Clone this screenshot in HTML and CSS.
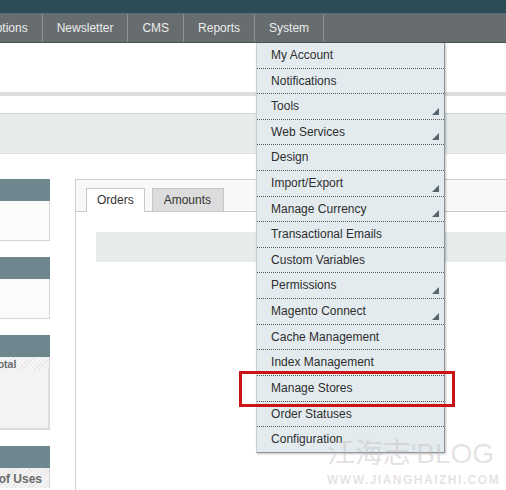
FILE: index.html
```html
<!DOCTYPE html>
<html>
<head>
<meta charset="utf-8">
<link rel="stylesheet" href="styles.css">
</head>
<body>
<div class="topbar"></div>
<ul class="nav">
  <li class="nav-item first">Promotions</li>
  <li class="nav-item">Newsletter</li>
  <li class="nav-item">CMS</li>
  <li class="nav-item">Reports</li>
  <li class="nav-item sys">System
    <ul class="dropdown">
      <li class="dd-item">My Account</li>
      <li class="dd-item">Notifications</li>
      <li class="dd-item sub">Tools</li>
      <li class="dd-item sub">Web Services</li>
      <li class="dd-item">Design</li>
      <li class="dd-item sub">Import/Export</li>
      <li class="dd-item sub">Manage Currency</li>
      <li class="dd-item">Transactional Emails</li>
      <li class="dd-item">Custom Variables</li>
      <li class="dd-item sub">Permissions</li>
      <li class="dd-item sub">Magento Connect</li>
      <li class="dd-item">Cache Management</li>
      <li class="dd-item">Index Management</li>
      <li class="dd-item">Manage Stores</li>
      <li class="dd-item">Order Statuses</li>
      <li class="dd-item last">Configuration</li>
    </ul>
  </li>
</ul>
<div class="page-head"></div>
<div class="rule"></div>
<div class="spacer"></div>
<div class="band"></div>
<div class="main">
  <div class="side">
    <div class="box">
      <div class="box-head"></div>
      <div class="box-body"></div>
    </div>
    <div class="box">
      <div class="box-head"></div>
      <div class="box-body"></div>
    </div>
    <div class="box">
      <div class="box-head"></div>
      <div class="box-sub total">Total</div>
      <div class="box-body thick"></div>
    </div>
    <div class="box">
      <div class="box-head"></div>
      <div class="box-sub uses">Number of Uses</div>
    </div>
  </div>
  <div class="panel">
    <div class="tabs">
      <div class="tab active">Orders</div>
      <div class="tab">Amounts</div>
    </div>
    <div class="panel-body">
      <div class="panel-bar"></div>
    </div>
  </div>
</div>
<div class="highlight"></div>
<div class="watermark">
  <div class="wm-big">江海志'BLOG</div>
  <div class="wm-small">WWW.JIANGHAIZHI.COM</div>
</div>
</body>
</html>
```
FILE: styles.css
```css
html, body {
  margin: 0;
  padding: 0;
  background: #fff;
  overflow: hidden;
  width: 506px;
  height: 490px;
}
body {
  font-family: "Liberation Sans", Arial, sans-serif;
  position: relative;
}
.topbar {
  height: 13px;
  background: #2e4c56;
  border-bottom: 1px solid #55737b;
}
.nav {
  list-style: none;
  margin: 0;
  padding: 0;
  display: flex;
  height: 28px;
  background: #676c6f;
  border-bottom: 1px solid #4c5153;
  position: relative;
  z-index: 5;
}
.nav-item {
  position: relative;
  padding: 0 14px;
  line-height: 29px;
  font-size: 12px;
  color: #ececec;
  border-right: 1px solid #8b9093;
  white-space: nowrap;
}
.nav-item.first {
  margin-left: -47px;
}
.dropdown {
  list-style: none;
  margin: 0;
  padding: 0;
  position: absolute;
  top: 29px;
  left: 1px;
  width: 187px;
  background: #e3ebee;
  border-left: 1px solid #c9cfd1;
  border-right: 1px solid #8e9496;
  border-bottom: 1px solid #8e9496;
  box-shadow: 1px 1px 2px rgba(0,0,0,0.25);
}
.dd-item {
  position: relative;
  height: 24.62px;
  line-height: 25px;
  padding-left: 14px;
  font-size: 12px;
  color: #2e2e2e;
  border-bottom: 1px dotted #5a5a5a;
}
.dd-item.last {
  border-bottom: none;
  height: 25px;
}
.dd-item.sub::after {
  content: "";
  position: absolute;
  right: 5px;
  bottom: 4px;
  width: 0;
  height: 0;
  border-left: 7px solid transparent;
  border-bottom: 7px solid #55656b;
}
.page-head {
  height: 49px;
}
.rule {
  height: 4px;
  background: #dedede;
}
.spacer {
  height: 17px;
}
.band {
  height: 39px;
  background: #e6ecec;
  border-top: 1px solid #cfd4d4;
  border-bottom: 1px solid #dde3e3;
}
.main {
  display: flex;
  gap: 25px;
  padding-top: 25px;
}
.side {
  width: 50px;
  flex: none;
  display: flex;
  flex-direction: column;
  gap: 16px;
}
.box {
  display: flex;
  flex-direction: column;
}
.box-head {
  height: 22px;
  background: #6e878f;
}
.box-body {
  height: 39px;
  background: #fbfbfb;
  border-right: 1px solid #d4d4d4;
  border-bottom: 1px solid #d4d4d4;
}
.box-body.thick {
  height: 58px;
  background: #f3f3f3;
  border-right: 2px solid #dcdcdc;
  border-bottom: 2px solid #dcdcdc;
}
.box-sub {
  font-weight: bold;
  color: #6b6b6b;
  white-space: nowrap;
  overflow: hidden;
  border-right: 1px solid #d4d4d4;
}
.box-sub.total {
  height: 13px;
  font-size: 10.5px;
  line-height: 15px;
  text-indent: -8px;
  background: repeating-linear-gradient(135deg, #e8e8e8 0 1px, #f7f7f7 1px 3px);
}
.box-sub.uses {
  height: 20px;
  line-height: 22px;
  font-size: 12px;
  direction: rtl;
  padding-right: 7px;
  background: repeating-linear-gradient(135deg, #e6e6e6 0 1px, #f4f4f4 1px 3px);
}
.panel {
  flex: 1;
  margin-right: -40px;
  border-left: 1px solid #cfcfcf;
  border-top: 1px solid #cfcfcf;
  height: 320px;
}
.tabs {
  display: flex;
  gap: 7px;
  padding: 8px 0 0 10px;
  background: #f8f8f8;
  border-bottom: 1px solid #c8c8c8;
  height: 23px;
}
.tab {
  height: 22px;
  line-height: 22px;
  font-size: 12px;
  color: #333;
  padding: 0 10px;
  border: 1px solid #c8c8c8;
  border-bottom: none;
  background: #dcdcdc;
}
.tab.active {
  background: #fff;
  height: 23px;
}
.tab:not(.active) {
  padding: 0 12px 0 11px;
}
.panel-body {
  padding: 20px 0 0 20px;
}
.panel-bar {
  height: 30px;
  background: #e6ecec;
}
.highlight {
  position: absolute;
  left: 239px;
  top: 371px;
  width: 210px;
  height: 30px;
  border: 3px solid #cc1417;
  z-index: 10;
}
.watermark {
  position: absolute;
  left: 327px;
  top: 439px;
  z-index: 11;
  white-space: nowrap;
  color: rgba(195,185,187,0.42);
  font-family: "Liberation Sans", "Noto Sans CJK SC", sans-serif;
}
.wm-big {
  font-size: 28px;
  line-height: 30px;
  height: 30px;
}
.wm-small {
  font-size: 12px;
  font-weight: bold;
  letter-spacing: 1.5px;
  line-height: 14px;
  margin-top: 4px;
}
```
